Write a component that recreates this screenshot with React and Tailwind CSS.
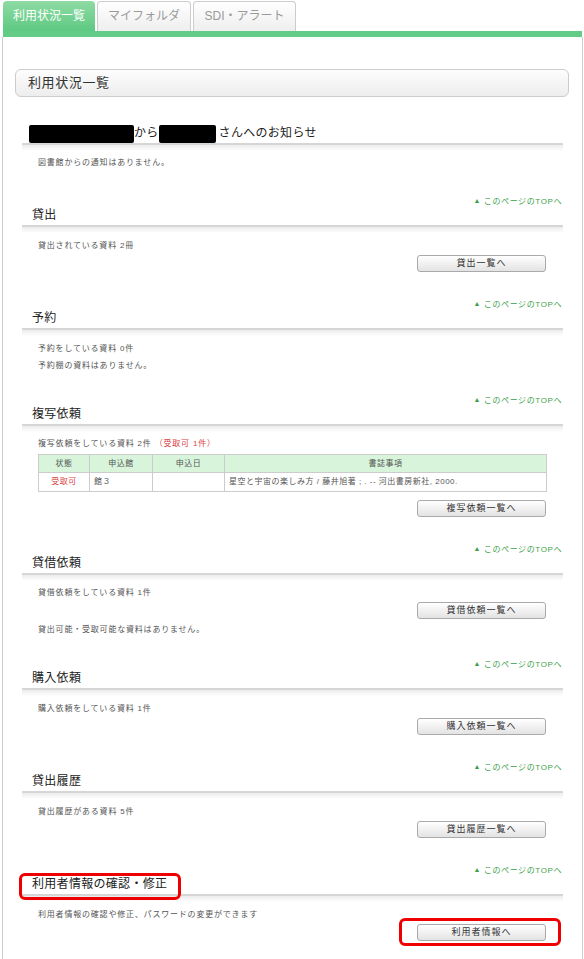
import React from "react";

function TopLink() {
  return (
    <div className="h-[10px] leading-[10px] text-right text-[8px] tracking-[0.6px] text-[#3d9f4a] pr-[1px]">
      <span className="text-[7px] align-[1px]">▲</span> このページのTOPへ
    </div>
  );
}

function Heading({ children, boxed }) {
  return (
    <div>
      <div className="relative h-[21px] leading-[19px] pl-[10px] text-[12px] tracking-[0.3px] text-[#222] border-b-2 border-[#d6d6d6]">
        {children}
        {boxed && (
          <span className="absolute left-[-3px] top-[-2px] w-[162px] h-[27px] border-[3px] border-[#ee0000] rounded-[6px]" />
        )}
      </div>
      <div className="h-[6px] bg-linear-to-b from-[#ececec] to-white" />
    </div>
  );
}

function Btn({ children, boxed, className }) {
  return (
    <div className={"flex justify-end pr-[17px] " + className}>
      <div className="relative w-[129px] h-[17px] leading-[15px] text-center border border-[#aaaaaa] rounded-[3px] bg-linear-to-b from-white to-[#e3e3e3] text-[9px] tracking-[1px] text-[#333]">
        {children}
        {boxed && (
          <span className="absolute left-[-19px] top-[-7px] w-[162px] h-[28px] border-[3px] border-[#ee0000] rounded-[6px]" />
        )}
      </div>
    </div>
  );
}

function P({ children }) {
  return (
    <p className="leading-[17px] text-[8px] tracking-[0.8px] text-[#555] pl-[16px]">
      {children}
    </p>
  );
}

export default function App() {
  return (
    <div className="w-[584px] min-h-[959px] bg-white overflow-hidden font-['Liberation_Sans','Noto_Sans_CJK_JP',sans-serif]">
      {/* tabs */}
      <div className="flex gap-[2px] pl-[3px] pt-[1px]">
        <div className="w-[92px] h-[30px] leading-[30px] text-center text-[12px] text-white rounded-t-[4px] bg-linear-to-b from-[#8edba3] to-[#5dc982]">
          利用状況一覧
        </div>
        <div className="w-[94px] h-[30px] leading-[28px] text-center text-[12px] text-[#9a9a9a] rounded-t-[4px] border border-b-0 border-[#cccccc] bg-linear-to-b from-white to-[#eeeeee]">
          マイフォルダ
        </div>
        <div className="w-[103px] h-[30px] leading-[28px] text-center text-[12px] text-[#9a9a9a] rounded-t-[4px] border border-b-0 border-[#cccccc] bg-linear-to-b from-white to-[#eeeeee]">
          SDI・アラート
        </div>
      </div>
      <div className="ml-[3px] w-[579px] h-[6px] bg-[#62cb86]" />
      <div className="ml-[2px] w-[581px] min-h-[922px] border-x border-[#cccccc] pt-[32px]">
        <div className="ml-[12px] w-[554px] h-[28px] leading-[26px] pl-[12px] text-[13px] tracking-[0.6px] text-[#333] border border-[#cccccc] rounded-[6px] bg-linear-to-b from-[#fdfdfd] to-[#ededed]">
          利用状況一覧
        </div>

        <div className="ml-[19px] w-[541px]">
          {/* お知らせ */}
          <div className="pt-[27px] pb-[25px]">
            <Heading>
              <span className="inline-block align-middle -ml-[3px] w-[105px] h-[18px] bg-black rounded-[2px]" />
              から
              <span className="inline-block align-middle w-[57px] h-[18px] bg-black rounded-[2px] mr-[3px]" />
              さんへのお知らせ
            </Heading>
            <div className="pt-[3px]">
              <P>図書館からの通知はありません。</P>
            </div>
          </div>

          {/* 貸出 */}
          <div className="pb-[21px]">
            <TopLink />
            <Heading>貸出</Heading>
            <div className="pt-[4px]">
              <P>貸出されている資料 2冊</P>
              <Btn className="mt-[1px] mb-[6px]">貸出一覧へ</Btn>
            </div>
          </div>

          {/* 予約 */}
          <div className="pb-[21px]">
            <TopLink />
            <Heading>予約</Heading>
            <div className="pt-[4px]">
              <P>予約をしている資料 0件</P>
              <P>予約棚の資料はありません。</P>
            </div>
          </div>

          {/* 複写依頼 */}
          <div className="pb-[21px]">
            <TopLink />
            <Heading>複写依頼</Heading>
            <div className="pt-[3px]">
              <P>
                複写依頼をしている資料 2件 <span className="text-[#d9443f]">（受取可 1件）</span>
              </P>
              <div className="pl-[16px] mt-[2px]">
                <table className="w-[509px] border-collapse text-[8px] tracking-[0.5px] text-[#555]">
                  <thead>
                    <tr className="h-[18px] bg-[#d8f5dc]">
                      <th className="w-[51px] border border-[#cccccc] font-normal text-center p-0">状態</th>
                      <th className="w-[63px] border border-[#cccccc] font-normal text-center p-0">申込館</th>
                      <th className="w-[72px] border border-[#cccccc] font-normal text-center p-0">申込日</th>
                      <th className="border border-[#cccccc] font-normal text-center p-0">書誌事項</th>
                    </tr>
                  </thead>
                  <tbody>
                    <tr className="h-[19px]">
                      <td className="border border-[#cccccc] text-center text-[#d9443f] p-0">受取可</td>
                      <td className="border border-[#cccccc] pl-[4px] p-0">館３</td>
                      <td className="border border-[#cccccc] p-0"></td>
                      <td className="border border-[#cccccc] pl-[4px] p-0">
                        星空と宇宙の楽しみ方 / 藤井旭著 ; . -- 河出書房新社, 2000.
                      </td>
                    </tr>
                  </tbody>
                </table>
              </div>
              <Btn className="mt-[8px] mb-[6px]">複写依頼一覧へ</Btn>
            </div>
          </div>

          {/* 貸借依頼 */}
          <div className="pb-[21px]">
            <TopLink />
            <Heading>貸借依頼</Heading>
            <div className="pt-[3px]">
              <P>貸借依頼をしている資料 1件</P>
              <Btn className="mt-[1px] mb-[2px]">貸借依頼一覧へ</Btn>
              <P>貸出可能・受取可能な資料はありません。</P>
            </div>
          </div>

          {/* 購入依頼 */}
          <div className="pb-[21px]">
            <TopLink />
            <Heading>購入依頼</Heading>
            <div className="pt-[4px]">
              <P>購入依頼をしている資料 1件</P>
              <Btn className="mt-[1px] mb-[6px]">購入依頼一覧へ</Btn>
            </div>
          </div>

          {/* 貸出履歴 */}
          <div className="pb-[21px]">
            <TopLink />
            <Heading>貸出履歴</Heading>
            <div className="pt-[4px]">
              <P>貸出履歴がある資料 5件</P>
              <Btn className="mt-[1px] mb-[6px]">貸出履歴一覧へ</Btn>
            </div>
          </div>

          {/* 利用者情報 */}
          <div className="pb-[21px]">
            <TopLink />
            <Heading boxed>利用者情報の確認・修正</Heading>
            <div className="pt-[4px]">
              <P>利用者情報の確認や修正、パスワードの変更ができます</P>
              <Btn boxed className="mt-[1px] mb-[6px]">利用者情報へ</Btn>
            </div>
          </div>
        </div>
      </div>
    </div>
  );
}
